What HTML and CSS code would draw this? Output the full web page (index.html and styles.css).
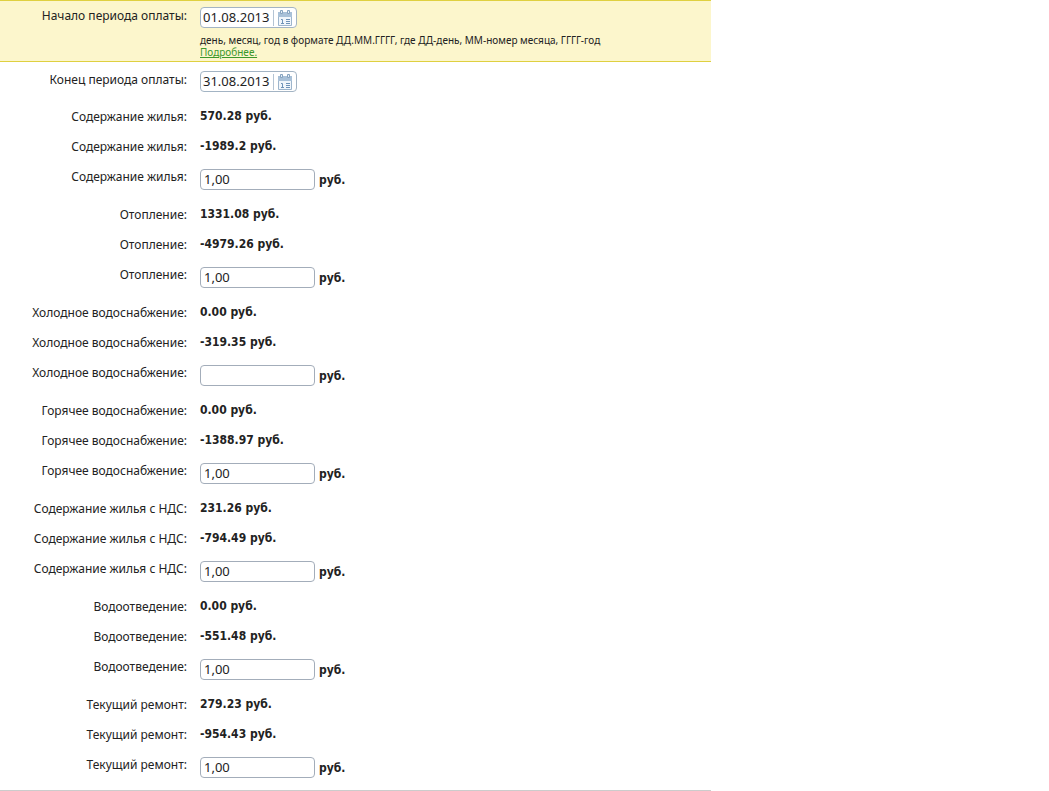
FILE: index.html
```
<!DOCTYPE html>
<html lang="ru">
<head>
    <meta charset="UTF-8">
    <meta name="viewport" content="width=device-width, initial-scale=1.0">
    <title>Оплата услуг</title>
    <link rel="stylesheet" href="styles.css">
</head>
<body>
    <svg class="sprite" aria-hidden="true">
        <symbol id="calendar" viewBox="0 0 16 16">
            <path d="M1.5 2.5h13v13h-13z" fill="#f1f6fb" stroke="#9db5cc"/>
            <path d="M1 2h14v5H1z" fill="#a9c1d8"/>
            <path d="M3.5 .5h2v3h-2zM10.5 .5h2v3h-2z" fill="#e6eff7" stroke="#86a3bf"/>
            <path d="M4 9.5h1.5v4M4 13.5h3M9 9.5h4M9 11.5h4M9 13.5h4" fill="none" stroke="#6f93b8"/>
        </symbol>
    </svg>
    <form class="payment">
        <div class="row period highlighted">
            <label class="name" for="date-from">Начало периода оплаты:</label>
            <div class="field">
                <div class="date">
                    <input id="date-from" type="text" value="01.08.2013">
                    <button type="button" aria-label="Выбрать дату"><svg><use href="#calendar"/></svg></button>
                </div>
                <div class="hint">
                    день, месяц, год в формате ДД.ММ.ГГГГ, где ДД-день, ММ-номер месяца, ГГГГ-год<br>
                    <a href="#">Подробнее.</a>
                </div>
            </div>
        </div>
        <div class="row period">
            <label class="name" for="date-to">Конец периода оплаты:</label>
            <div class="field">
                <div class="date">
                    <input id="date-to" type="text" value="31.08.2013">
                    <button type="button" aria-label="Выбрать дату"><svg><use href="#calendar"/></svg></button>
                </div>
            </div>
        </div>

        <div class="service">
            <div class="row"><span class="name">Содержание жилья:</span><b class="value">570.28 руб.</b></div>
            <div class="row"><span class="name">Содержание жилья:</span><b class="value">-1989.2 руб.</b></div>
            <div class="row"><label class="name" for="sum1">Содержание жилья:</label><div class="sum"><input id="sum1" type="text" value="1,00"><b>руб.</b></div></div>
        </div>
        <div class="service">
            <div class="row"><span class="name">Отопление:</span><b class="value">1331.08 руб.</b></div>
            <div class="row"><span class="name">Отопление:</span><b class="value">-4979.26 руб.</b></div>
            <div class="row"><label class="name" for="sum2">Отопление:</label><div class="sum"><input id="sum2" type="text" value="1,00"><b>руб.</b></div></div>
        </div>
        <div class="service">
            <div class="row"><span class="name">Холодное водоснабжение:</span><b class="value">0.00 руб.</b></div>
            <div class="row"><span class="name">Холодное водоснабжение:</span><b class="value">-319.35 руб.</b></div>
            <div class="row"><label class="name" for="sum3">Холодное водоснабжение:</label><div class="sum"><input id="sum3" type="text" value=""><b>руб.</b></div></div>
        </div>
        <div class="service">
            <div class="row"><span class="name">Горячее водоснабжение:</span><b class="value">0.00 руб.</b></div>
            <div class="row"><span class="name">Горячее водоснабжение:</span><b class="value">-1388.97 руб.</b></div>
            <div class="row"><label class="name" for="sum4">Горячее водоснабжение:</label><div class="sum"><input id="sum4" type="text" value="1,00"><b>руб.</b></div></div>
        </div>
        <div class="service">
            <div class="row"><span class="name">Содержание жилья с НДС:</span><b class="value">231.26 руб.</b></div>
            <div class="row"><span class="name">Содержание жилья с НДС:</span><b class="value">-794.49 руб.</b></div>
            <div class="row"><label class="name" for="sum5">Содержание жилья с НДС:</label><div class="sum"><input id="sum5" type="text" value="1,00"><b>руб.</b></div></div>
        </div>
        <div class="service">
            <div class="row"><span class="name">Водоотведение:</span><b class="value">0.00 руб.</b></div>
            <div class="row"><span class="name">Водоотведение:</span><b class="value">-551.48 руб.</b></div>
            <div class="row"><label class="name" for="sum6">Водоотведение:</label><div class="sum"><input id="sum6" type="text" value="1,00"><b>руб.</b></div></div>
        </div>
        <div class="service">
            <div class="row"><span class="name">Текущий ремонт:</span><b class="value">279.23 руб.</b></div>
            <div class="row"><span class="name">Текущий ремонт:</span><b class="value">-954.43 руб.</b></div>
            <div class="row"><label class="name" for="sum7">Текущий ремонт:</label><div class="sum"><input id="sum7" type="text" value="1,00"><b>руб.</b></div></div>
        </div>
    </form>
</body>
</html>
```
FILE: styles.css
```
body {
    margin: 0;
    background: #fff;
    color: #222;
    font: 12px/16px "Noto Sans", "Open Sans", sans-serif;
}
.sprite {
    display: none;
}
.payment {
    max-width: 711px;
    padding-bottom: 1px;
    border-bottom: 1px solid #ccc;
}
.row {
    display: grid;
    grid-template-columns: 187px 1fr;
    column-gap: 13px;
    align-items: start;
}
.name {
    text-align: right;
}
b {
    font-family: "DejaVu Sans Condensed", "Noto Sans", sans-serif;
    line-height: 14px;
}

/* период оплаты */
.period {
    padding: 9px 0 11px;
}
.period .name {
    line-height: 18px;
}
.highlighted {
    padding: 6px 0 3px;
    background: #fcf6cc;
    border-top: 1px solid #dfd040;
    border-bottom: 1px solid #dfd040;
}
.hint {
    margin-top: 6px;
    font-size: 10px;
    line-height: 12px;
}
.hint a {
    color: #3c982c;
}

input {
    box-sizing: border-box;
    margin: 0;
    padding: 0 3px 2px;
    border: 1px solid #a3adba;
    border-radius: 4px;
    background: #fff;
    color: #222;
    font: 13px "Noto Sans", sans-serif;
}
.date {
    display: flex;
    align-items: center;
    box-sizing: border-box;
    width: 97px;
    height: 21px;
    border: 1px solid #a3b4c4;
    border-radius: 4px;
    background: #fff;
}
.date input {
    width: 72px;
    padding: 0 0 2px 2px;
    border: 0;
    background: none;
}
.date button {
    display: flex;
    padding: 0 0 0 3px;
    border: 0;
    border-left: 1px solid #b4c4d4;
    background: none;
    cursor: pointer;
}
.date svg {
    width: 16px;
    height: 16px;
}

/* услуги */
.service {
    display: grid;
    row-gap: 14px;
    padding: 6px 0 11px;
}
.sum {
    display: flex;
    align-items: center;
    gap: 4px;
}
.sum input {
    width: 115px;
    height: 21px;
}
```
